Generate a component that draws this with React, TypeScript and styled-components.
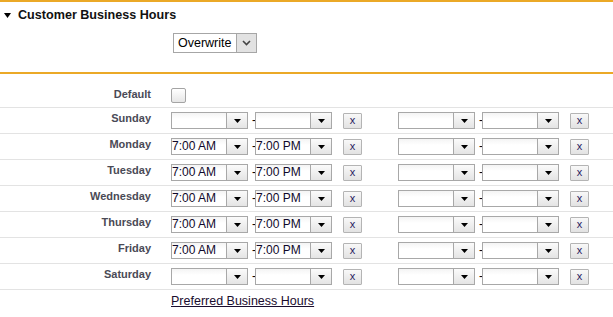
import React from 'react';
import styled, { createGlobalStyle } from 'styled-components';

const days = [
  { name: 'Sunday', start: '', end: '' },
  { name: 'Monday', start: '7:00 AM', end: '7:00 PM' },
  { name: 'Tuesday', start: '7:00 AM', end: '7:00 PM' },
  { name: 'Wednesday', start: '7:00 AM', end: '7:00 PM' },
  { name: 'Thursday', start: '7:00 AM', end: '7:00 PM' },
  { name: 'Friday', start: '7:00 AM', end: '7:00 PM' },
  { name: 'Saturday', start: '', end: '' },
];

const TimeCombo = ({ value }: { value: string }) => (
  <Combo>
    <ComboValue>{value}</ComboValue>
    <ComboButton>
      <svg width="7" height="4" viewBox="0 0 7 4">
        <polygon points="0,0 7,0 3.5,4" fill="#000" />
      </svg>
    </ComboButton>
  </Combo>
);

const Range = ({ start, end }: { start: string; end: string }) => (
  <RangeGroup>
    <TimeCombo value={start} />
    <Dash>-</Dash>
    <TimeCombo value={end} />
    <ClearButton type="button">x</ClearButton>
  </RangeGroup>
);

const App = () => {
  return (
    <>
      <GlobalStyle />
      <Section>
        <SectionHeader>
          <svg width="7" height="5" viewBox="0 0 7 5">
            <polygon points="0,0 7,0 3.5,5" fill="#000" />
          </svg>
          <Title>Customer Business Hours</Title>
        </SectionHeader>

        <ModeBlock>
          <ModeSelect>
            <ModeValue>Overwrite</ModeValue>
            <ModeButton>
              <svg width="9" height="6" viewBox="0 0 9 6">
                <polyline points="1,1 4.5,4.5 8,1" fill="none" stroke="#444" strokeWidth="1.6" />
              </svg>
            </ModeButton>
          </ModeSelect>
        </ModeBlock>

        <Row $first>
          <Label>Default</Label>
          <Checkbox type="checkbox" />
        </Row>

        {days.map((day) => (
          <Row key={day.name}>
            <Label>{day.name}</Label>
            <Hours>
              <Range start={day.start} end={day.end} />
              <Range start="" end="" />
            </Hours>
          </Row>
        ))}

        <LinkRow>
          <span />
          <HoursLink href="#">Preferred Business Hours</HoursLink>
        </LinkRow>
      </Section>
    </>
  );
};

const GlobalStyle = createGlobalStyle`
  body {
    margin: 0;
    background: #fff;
    font-family: "Liberation Sans", Arial, sans-serif;
    color: #000;
  }
`;

const Section = styled.div`
  width: 613px;
`;

const SectionHeader = styled.div`
  display: flex;
  align-items: center;
  gap: 7px;
  border-top: 2px solid #eba927;
  padding: 5px 0 0 4px;
  height: 16px;
`;

const Title = styled.h3`
  margin: 0;
  font-size: 12.6px;
  line-height: 16px;
  font-weight: bold;
  color: #111;
`;

const ModeBlock = styled.div`
  padding: 10px 0 19px 173px;
  border-bottom: 2px solid #eba927;
`;

const ModeSelect = styled.div`
  display: flex;
  width: 82px;
  height: 18px;
  border: 1px solid #a6a6a6;
  background: #fff;
`;

const ModeValue = styled.div`
  flex: 1;
  padding-left: 4px;
  font-size: 12.5px;
  line-height: 18px;
`;

const ModeButton = styled.div`
  width: 19px;
  display: flex;
  align-items: center;
  justify-content: center;
  background: #e2e2e2;
  border-left: 1px solid #a6a6a6;
`;

const Row = styled.div<{ $first?: boolean }>`
  display: grid;
  grid-template-columns: 151px auto;
  column-gap: 20px;
  align-items: start;
  padding: ${(p) => (p.$first ? '14px 0 4px' : '4px 0')};
  border-bottom: 1px solid #e3e3e3;
`;

const Label = styled.div`
  text-align: right;
  font-size: 11px;
  line-height: 13px;
  font-weight: bold;
  color: #4a4a56;
`;

const Checkbox = styled.input`
  appearance: none;
  margin: 0;
  width: 15px;
  height: 15px;
  border: 1px solid #a4a4a4;
  border-radius: 2px;
  background: linear-gradient(#ffffff, #e6e6e6);
`;

const Hours = styled.div`
  display: flex;
  gap: 36px;
`;

const RangeGroup = styled.div`
  display: flex;
  align-items: flex-start;
`;

const Combo = styled.div`
  display: flex;
  width: 77px;
  height: 17px;
  box-sizing: border-box;
  border: 1px solid #a8a8a8;
  background: linear-gradient(#f4f4f4, #ffffff 40%);
`;

const ComboValue = styled.div`
  flex: 1;
  font-size: 12px;
  line-height: 15px;
  color: #10082a;
  white-space: nowrap;
  overflow: hidden;
`;

const ComboButton = styled.div`
  width: 20px;
  display: flex;
  align-items: center;
  justify-content: center;
  border-left: 1px solid #a8a8a8;
  background: linear-gradient(#fbfbfb, #e4e4e4);
`;

const Dash = styled.span`
  width: 3px;
  padding-left: 4px;
  font-size: 12px;
  line-height: 16px;
  overflow: hidden;
`;

const ClearButton = styled.button`
  margin: 1px 0 0 11px;
  width: 19px;
  height: 16px;
  padding: 0 0 2px;
  box-sizing: border-box;
  border: 1px solid #b4b4b4;
  border-radius: 1px;
  background: linear-gradient(#f8f8f8, #e2e2e2);
  font-family: "Liberation Sans", Arial, sans-serif;
  font-size: 11px;
  line-height: 12px;
  color: #2a2060;
`;

const LinkRow = styled.div`
  display: grid;
  grid-template-columns: 151px auto;
  column-gap: 20px;
  padding-top: 4px;
`;

const HoursLink = styled.a`
  justify-self: start;
  font-size: 12.5px;
  line-height: 14px;
  color: #1a0d2e;
  text-decoration: underline;
`;

export default App;
